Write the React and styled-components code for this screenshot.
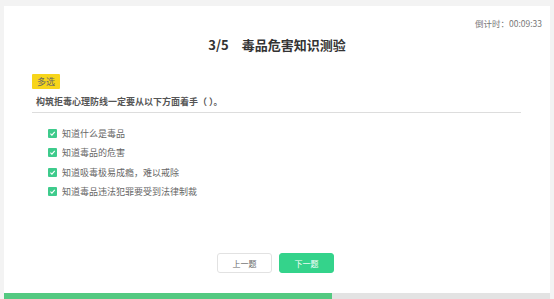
import React, { useState } from "react";
import styled, { createGlobalStyle } from "styled-components";

const GlobalStyle = createGlobalStyle`
  html, body {
    margin: 0;
    padding: 0;
    background: #f3f3f3;
    font-family: "Noto Sans CJK SC", "Noto Sans", sans-serif;
  }
  #root {
    height: 299px;
    overflow: hidden;
  }
`;

const Page = styled.div`
  height: 299px;
  padding: 6px 4px 0 4px;
  box-sizing: border-box;
`;

const Card = styled.div`
  background: #fff;
  height: 293px;
  display: flex;
  flex-direction: column;
`;

const TopBar = styled.div`
  display: flex;
  justify-content: flex-end;
  padding: 11px 8px 0 0;
  height: 12px;
`;

const Timer = styled.span`
  font-size: 8.5px;
  line-height: 12px;
  color: #777;
`;

const Title = styled.h1`
  margin: 6px 0 0;
  text-align: center;
  font-size: 13px;
  line-height: 20px;
  font-weight: 700;
  color: #333;

  span {
    margin-right: 13px;
  }
`;

const Body = styled.div`
  padding: 0 29px 0 28px;
  flex: 1;
  display: flex;
  flex-direction: column;
`;

const Tag = styled.span`
  align-self: flex-start;
  margin-top: 19px;
  background: #f7d51b;
  color: #666;
  font-size: 9px;
  line-height: 15px;
  padding: 0 5px;
  border-radius: 1px;
`;

const Question = styled.div`
  margin-top: 6px;
  padding: 0 4px 3px;
  font-size: 9px;
  line-height: 14px;
  font-weight: 700;
  color: #555;
  border-bottom: 1px solid #ddd;
`;

const Options = styled.ul`
  list-style: none;
  margin: 13px 0 0;
  padding: 0 0 0 16px;
  display: flex;
  flex-direction: column;
  gap: 5.5px;
`;

const Option = styled.li`
  display: flex;
  align-items: center;
  gap: 5px;
  height: 14px;
  font-size: 9px;
  color: #666;
  cursor: pointer;
`;

const Box = styled.span`
  width: 9px;
  height: 9px;
  border-radius: 1px;
  background: ${(p) => (p.$on ? "#3ecb8c" : "#fff")};
  border: ${(p) => (p.$on ? "none" : "1px solid #ccc")};
  display: flex;
  align-items: center;
  justify-content: center;
`;

const Actions = styled.div`
  margin-top: auto;
  margin-bottom: 20px;
  display: flex;
  justify-content: center;
  gap: 7px;
  padding-right: 2px;
`;

const Button = styled.button`
  width: 55px;
  height: 20px;
  border-radius: 3px;
  font-family: inherit;
  font-size: 8px;
  padding: 0;
  cursor: pointer;
  border: 1px solid ${(p) => (p.$primary ? "#34d38b" : "#e2e2e2")};
  background: ${(p) => (p.$primary ? "#34d38b" : "#fff")};
  color: ${(p) => (p.$primary ? "#fff" : "#666")};
`;

const Progress = styled.div`
  height: 6px;
  background: #e3e3e3;
`;

const Fill = styled.div`
  height: 100%;
  background: #54c981;
`;

const options = [
  "知道什么是毒品",
  "知道毒品的危害",
  "知道吸毒极易成瘾，难以戒除",
  "知道毒品违法犯罪要受到法律制裁",
];

export default function App() {
  const [checked, setChecked] = useState([true, true, true, true]);
  const toggle = (i) =>
    setChecked(checked.map((c, j) => (j === i ? !c : c)));

  return (
    <>
      <GlobalStyle />
      <Page>
        <Card>
          <TopBar>
            <Timer>倒计时：00:09:33</Timer>
          </TopBar>
          <Title>
            <span>3/5</span>毒品危害知识测验
          </Title>
          <Body>
            <Tag>多选</Tag>
            <Question>构筑拒毒心理防线一定要从以下方面着手（ ）。</Question>
            <Options>
              {options.map((o, i) => (
                <Option key={o} onClick={() => toggle(i)}>
                  <Box $on={checked[i]}>
                    {checked[i] && (
                      <svg width="7" height="7" viewBox="0 0 10 10">
                        <path
                          d="M2 5.2 L4.2 7.3 L8.2 2.8"
                          fill="none"
                          stroke="#fff"
                          strokeWidth="1.6"
                        />
                      </svg>
                    )}
                  </Box>
                  {o}
                </Option>
              ))}
            </Options>
            <Actions>
              <Button>上一题</Button>
              <Button $primary>下一题</Button>
            </Actions>
          </Body>
          <Progress>
            <Fill style={{ width: `${(3 / 5) * 100}%` }} />
          </Progress>
        </Card>
      </Page>
    </>
  );
}
